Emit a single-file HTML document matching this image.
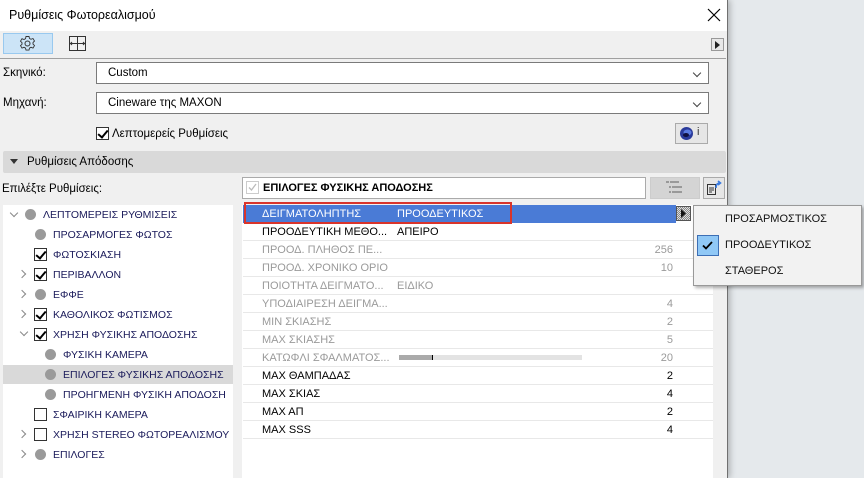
<!DOCTYPE html>
<html><head><meta charset="utf-8"><style>
*{margin:0;padding:0;box-sizing:border-box}
body{width:864px;height:478px;overflow:hidden;background:#e5e9ec;font-family:"Liberation Sans","DejaVu Sans",sans-serif;font-size:11px;color:#000;position:relative}
.a{position:absolute}
.dlg{left:0;top:0;width:728px;height:478px;background:#f0f0f0;border-right:1px solid #707070;box-shadow:2px 0 6px rgba(0,0,0,.25)}
.dd{background:#fff;border:1px solid #7a7a7a;height:22px}
.dd span{position:absolute;left:11px;top:4px;font-size:11.5px}
.chev{position:absolute;right:8px;top:7px;width:6px;height:6px;border-right:1px solid #444;border-bottom:1px solid #444;transform:rotate(45deg)}
.cb{width:13px;height:13px;border:1px solid #333;background:#fff}
.cb.k::after{content:"";position:absolute;left:3px;top:0px;width:4px;height:8px;border-right:2px solid #000;border-bottom:2px solid #000;transform:rotate(40deg)}
.dot{width:11px;height:11px;border-radius:50%;background:#9a9a9a}
.ar{width:6px;height:6px;border-right:1.3px solid #888;border-bottom:1.3px solid #888}
.ar.r{transform:rotate(-45deg)}
.ar.d{transform:rotate(45deg)}
.t{position:absolute;font-size:10.5px;color:#1a1a5a;white-space:nowrap}
.row{position:absolute;left:243px;width:470px;height:18px;border-bottom:1px solid #e8e8e8}
.row .n{position:absolute;left:19px;top:3px;white-space:nowrap}
.row .v{position:absolute;left:154px;top:3px}
.row .r{position:absolute;right:40px;top:3px}
.g{color:#9a9a9a}
</style></head><body>
<div class="a dlg">
  <div class="a" style="left:0;top:0;width:727px;height:31px;background:#fff"></div>
  <div class="a" style="left:9px;top:8px;font-size:12.5px">Ρυθμίσεις Φωτορεαλισμού</div>
  <svg class="a" style="left:707px;top:8px" width="14" height="14"><path d="M1 1L13 13M13 1L1 13" stroke="#000" stroke-width="1.2"/></svg>
  <div class="a" style="left:3px;top:33px;width:50px;height:21px;background:#cce4f7;border:1px solid #99c9ef"></div>
  <svg class="a" style="left:19px;top:35px" width="17" height="17" viewBox="0 0 17 17"><circle cx="8.5" cy="8.5" r="2.5" fill="none" stroke="#333"/><path d="M7 1.5h3l.5 2 1.5.8 2-.8 1.5 2.5-1.5 1.5v1.6l1.5 1.5-1.5 2.5-2-.8-1.5.8-.5 2H7l-.5-2-1.5-.8-2 .8-1.5-2.5L3 9.3V7.7L1.5 6.2 3 3.7l2 .8 1.5-.8z" fill="none" stroke="#333" stroke-width=".9"/></svg>
  <svg class="a" style="left:69px;top:36px" width="17" height="15"><rect x=".5" y=".5" width="16" height="14" fill="none" stroke="#333"/><path d="M8.5 1v13M1 7.5h15" stroke="#333"/><path d="M3 6l-1.5 1.5L3 9M14 6l1.5 1.5L14 9" stroke="#333" fill="none"/></svg>
  <div class="a" style="left:711px;top:38px;width:13px;height:13px;border:1px solid #999;background:#e8e8e8"></div>
  <svg class="a" style="left:715px;top:41px" width="6" height="8"><path d="M0 0L5 4L0 8z" fill="#222"/></svg>
  <div class="a" style="left:0;top:58px;width:726px;height:1px;background:#a0a0a0"></div>
  <div class="a" style="left:3px;top:67px;font-size:11.5px">Σκηνικό:</div>
  <div class="a dd" style="left:96px;top:62px;width:613px"><span>Custom</span><i class="chev"></i></div>
  <div class="a" style="left:3px;top:97px;font-size:11.5px">Μηχανή:</div>
  <div class="a dd" style="left:96px;top:92px;width:613px"><span>Cineware της MAXON</span><i class="chev"></i></div>
  <div class="a cb k" style="left:96px;top:127px"></div>
  <div class="a" style="left:112px;top:128px;font-size:11.5px">Λεπτομερείς Ρυθμίσεις</div>
  <div class="a" style="left:675px;top:123px;width:33px;height:21px;border:1px solid #aaa;background:#e6e6e6"></div>
  <svg class="a" style="left:679px;top:126px" width="15" height="15"><circle cx="7.5" cy="7.5" r="6.5" fill="#2a3a9a"/><ellipse cx="8.5" cy="6.5" rx="4" ry="3" fill="#5a7ae0"/><ellipse cx="7" cy="9" rx="3" ry="2" fill="#101040"/></svg>
  <div class="a" style="left:697px;top:126px;font-size:11px;color:#333">i</div>
  <div class="a" style="left:3px;top:151px;width:723px;height:22px;background:#d9d9d9;border-radius:2px"></div>
  <svg class="a" style="left:10px;top:159px" width="8" height="5"><path d="M0 0h8L4 5z" fill="#333"/></svg>
  <div class="a" style="left:27px;top:156px;font-size:11.5px">Ρυθμίσεις Απόδοσης</div>
  <div class="a" style="left:2px;top:183px;font-size:11.5px">Επιλέξτε Ρυθμίσεις:</div>
  <div class="a" style="left:242px;top:177px;width:404px;height:22px;background:#fff;border:1px solid #aaa"></div>
  <svg class="a" style="left:246px;top:181px" width="13" height="13"><rect x=".5" y=".5" width="12" height="12" fill="#fff" stroke="#ccc"/><path d="M3 6.5l2.5 2.5L10 3" stroke="#bbb" fill="none" stroke-width="1.3"/></svg>
  <div class="a" style="left:263px;top:182px;font-weight:bold;font-size:11px">ΕΠΙΛΟΓΕΣ ΦΥΣΙΚΗΣ ΑΠΟΔΟΣΗΣ</div>
  <div class="a" style="left:650px;top:177px;width:50px;height:22px;background:#d4d4d4;border:1px solid #ccc"></div>
  <svg class="a" style="left:666px;top:181px" width="18" height="14"><path d="M0 1h3M4 1h9M3 6h2M6 6h10M3 11h2M6 11h10" stroke="#999" stroke-width="2"/></svg>
  <div class="a" style="left:703px;top:177px;width:22px;height:22px;border:1px solid #aaa;background:#e6e6e6"></div>
  <svg class="a" style="left:706px;top:179px" width="16" height="17"><path d="M1.5 5.5h8v10h-8z" fill="none" stroke="#333"/><path d="M3 9h5M3 11h5M3 13h3" stroke="#333"/><path d="M10 9c0-4 2-5 4-5M12 2l2.5 2L12 6" stroke="#3a7be0" stroke-width="1.6" fill="none"/></svg>
  <div class="a" style="left:3px;top:205px;width:230px;height:273px;background:#fff"></div>
  <div class="a" style="left:3px;top:365px;width:230px;height:19px;background:#d9d9d9"></div>
  <div class="a" style="left:242px;top:205px;width:472px;height:273px;background:#fff"></div>
  <div class="a" style="left:713px;top:205px;width:13px;height:273px;background:#f0f0f0"></div>
</div>
<i class="a ar d" style="left:11px;top:210px"></i><i class="a dot" style="left:25px;top:209px"></i><div class="t" style="left:43px;top:209px">ΛΕΠΤΟΜΕΡΕΙΣ ΡΥΘΜΙΣΕΙΣ</div>
<i class="a dot" style="left:35px;top:229px"></i><div class="t" style="left:53px;top:229px">ΠΡΟΣΑΡΜΟΓΕΣ ΦΩΤΟΣ</div>
<i class="a cb k" style="left:34px;top:248px"></i><div class="t" style="left:53px;top:249px">ΦΩΤΟΣΚΙΑΣΗ</div>
<i class="a ar r" style="left:19px;top:271px"></i><i class="a cb k" style="left:34px;top:268px"></i><div class="t" style="left:53px;top:269px">ΠΕΡΙΒΑΛΛΟΝ</div>
<i class="a ar r" style="left:19px;top:291px"></i><i class="a dot" style="left:35px;top:289px"></i><div class="t" style="left:53px;top:289px">ΕΦΦΕ</div>
<i class="a ar r" style="left:19px;top:311px"></i><i class="a cb k" style="left:34px;top:308px"></i><div class="t" style="left:53px;top:309px">ΚΑΘΟΛΙΚΟΣ ΦΩΤΙΣΜΟΣ</div>
<i class="a ar d" style="left:21px;top:329px"></i><i class="a cb k" style="left:34px;top:328px"></i><div class="t" style="left:53px;top:329px">ΧΡΗΣΗ ΦΥΣΙΚΗΣ ΑΠΟΔΟΣΗΣ</div>
<i class="a dot" style="left:45px;top:349px"></i><div class="t" style="left:63px;top:349px">ΦΥΣΙΚΗ ΚΑΜΕΡΑ</div>
<i class="a dot" style="left:45px;top:369px"></i><div class="t" style="left:63px;top:369px">ΕΠΙΛΟΓΕΣ ΦΥΣΙΚΗΣ ΑΠΟΔΟΣΗΣ</div>
<i class="a dot" style="left:45px;top:389px"></i><div class="t" style="left:63px;top:389px">ΠΡΟΗΓΜΕΝΗ ΦΥΣΙΚΗ ΑΠΟΔΟΣΗ</div>
<i class="a cb" style="left:34px;top:408px"></i><div class="t" style="left:53px;top:409px">ΣΦΑΙΡΙΚΗ ΚΑΜΕΡΑ</div>
<i class="a ar r" style="left:19px;top:431px"></i><i class="a cb" style="left:34px;top:428px"></i><div class="t" style="left:53px;top:429px">ΧΡΗΣΗ STEREO ΦΩΤΟΡΕΑΛΙΣΜΟΥ</div>
<i class="a ar r" style="left:19px;top:451px"></i><i class="a dot" style="left:35px;top:449px"></i><div class="t" style="left:53px;top:449px">ΕΠΙΛΟΓΕΣ</div>
<div class="row" style="top:205px;width:433px;background:#4a7bd6;color:#fff;border:none"><span class="n">ΔΕΙΓΜΑΤΟΛΗΠΤΗΣ</span><span class="v">ΠΡΟΟΔΕΥΤΙΚΟΣ</span></div>
<div class="a" style="left:244px;top:202px;width:268px;height:22px;border:2px solid #d9342b"></div>
<div class="a" style="left:676px;top:206px;width:15px;height:15px;border:1px solid #555;background:repeating-conic-gradient(#888 0 25%,#ddd 0 50%) 0 0/2px 2px"></div>
<svg class="a" style="left:681px;top:209px" width="6" height="9"><path d="M0 0L5 4.5L0 9z" fill="#111"/></svg>
<div class="row" style="top:223px"><span class="n">ΠΡΟΟΔΕΥΤΙΚΗ ΜΕΘΟ...</span><span class="v">ΑΠΕΙΡΟ</span></div>
<div class="row g" style="top:241px"><span class="n">ΠΡΟΟΔ. ΠΛΗΘΟΣ ΠΕ...</span><span class="r">256</span></div>
<div class="row g" style="top:259px"><span class="n">ΠΡΟΟΔ. ΧΡΟΝΙΚΟ ΟΡΙΟ</span><span class="r">10</span></div>
<div class="row g" style="top:277px"><span class="n">ΠΟΙΟΤΗΤΑ ΔΕΙΓΜΑΤΟ...</span><span class="v">ΕΙΔΙΚΟ</span></div>
<div class="row g" style="top:295px"><span class="n">ΥΠΟΔΙΑΙΡΕΣΗ ΔΕΙΓΜΑ...</span><span class="r">4</span></div>
<div class="row g" style="top:313px"><span class="n">ΜΙΝ ΣΚΙΑΣΗΣ</span><span class="r">2</span></div>
<div class="row g" style="top:331px"><span class="n">ΜΑΧ ΣΚΙΑΣΗΣ</span><span class="r">5</span></div>
<div class="row g" style="top:349px"><span class="n">ΚΑΤΩΦΛΙ ΣΦΑΛΜΑΤΟΣ...</span><span class="r">20</span></div>
<div class="a" style="left:399px;top:355px;width:183px;height:5px;background:#e3e3e3"></div>
<div class="a" style="left:399px;top:355px;width:34px;height:5px;background:#aaa;border-right:1px solid #000"></div>
<div class="row" style="top:367px"><span class="n">ΜΑΧ ΘΑΜΠΑΔΑΣ</span><span class="r">2</span></div>
<div class="row" style="top:385px"><span class="n">ΜΑΧ ΣΚΙΑΣ</span><span class="r">4</span></div>
<div class="row" style="top:403px"><span class="n">ΜΑΧ ΑΠ</span><span class="r">2</span></div>
<div class="row" style="top:421px"><span class="n">ΜΑΧ SSS</span><span class="r">4</span></div>
<div class="a" style="left:693px;top:205px;width:169px;height:81px;background:#f2f2f2;border:1px solid #999;box-shadow:2px 2px 3px rgba(0,0,0,.3)"></div>
<div class="t" style="left:725px;top:213px;color:#111;font-size:11px">ΠΡΟΣΑΡΜΟΣΤΙΚΟΣ</div>
<div class="a" style="left:697px;top:235px;width:22px;height:21px;background:#90c8f6;border:1px solid #3d6fb5"></div>
<svg class="a" style="left:702px;top:241px" width="11" height="9"><path d="M1 4.5l3 3L10 1" stroke="#000" stroke-width="1.8" fill="none"/></svg>
<div class="t" style="left:725px;top:239px;color:#111;font-size:11px">ΠΡΟΟΔΕΥΤΙΚΟΣ</div>
<div class="t" style="left:725px;top:265px;color:#111;font-size:11px">ΣΤΑΘΕΡΟΣ</div>
</body></html>
